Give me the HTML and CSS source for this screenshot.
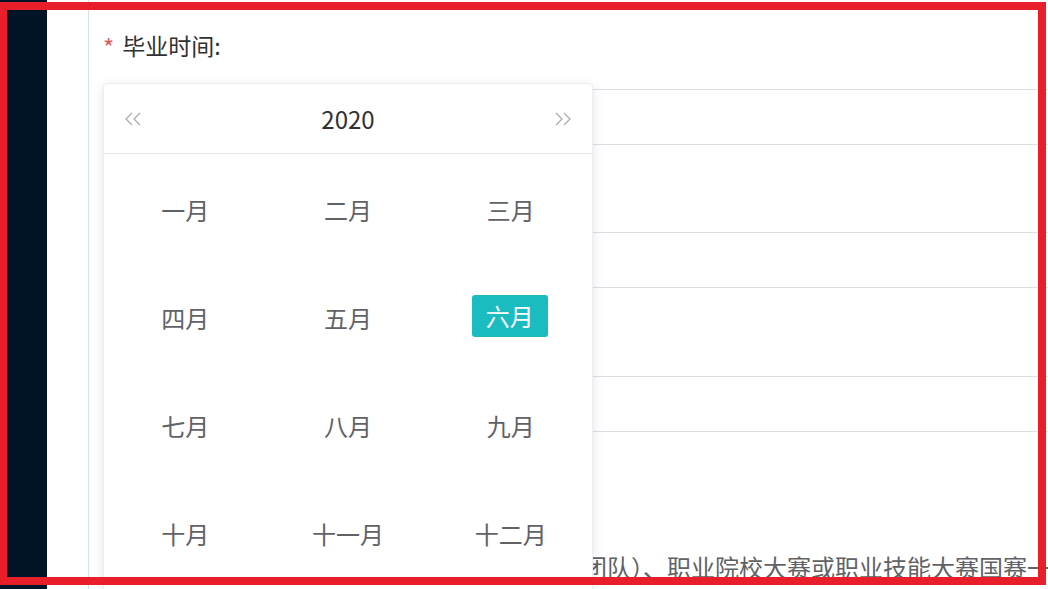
FILE: index.html
```html
<!DOCTYPE html>
<html lang="zh-CN">
<head>
  <meta charset="UTF-8">
  <meta name="viewport" content="width=device-width, initial-scale=1.0">
  <title>毕业时间</title>
  <link rel="stylesheet" href="styles.css">
</head>
<body>
  <div class="layout">
    <aside class="sidebar"></aside>
    <main class="main">
      <div class="content">
        <div class="form-label"><span class="required">*</span>毕业时间:</div>
        <div class="field field-first"></div>
        <div class="field field-gap"></div>
        <div class="field field-gap2"></div>
        <p class="desc">在校期间获得省级以上技能大赛奖项（个人或团队）、职业院校大赛或职业技能大赛国赛一等奖</p>

        <div class="picker">
          <div class="picker-header">
            <button class="arrow" aria-label="上一年">
              <svg width="18" height="14" viewBox="0 0 18 14"><path d="M8 1 L2 7 L8 13 M16 1 L10 7 L16 13" fill="none" stroke="#a8abb2" stroke-width="1.3"/></svg>
            </button>
            <span class="year">2020</span>
            <button class="arrow" aria-label="下一年">
              <svg width="18" height="14" viewBox="0 0 18 14"><path d="M2 1 L8 7 L2 13 M10 1 L16 7 L10 13" fill="none" stroke="#a8abb2" stroke-width="1.3"/></svg>
            </button>
          </div>
          <div class="months">
            <div class="month"><span>一月</span></div>
            <div class="month"><span>二月</span></div>
            <div class="month"><span>三月</span></div>
            <div class="month"><span>四月</span></div>
            <div class="month"><span>五月</span></div>
            <div class="month"><span class="current">六月</span></div>
            <div class="month"><span>七月</span></div>
            <div class="month"><span>八月</span></div>
            <div class="month"><span>九月</span></div>
            <div class="month"><span>十月</span></div>
            <div class="month"><span>十一月</span></div>
            <div class="month"><span>十二月</span></div>
          </div>
        </div>
      </div>
    </main>
  </div>
  <div class="frame"></div>
</body>
</html>
```

FILE: styles.css
```css
body {
  margin: 0;
  height: 589px;
  overflow: hidden;
  background: #fff;
  font-family: "Noto Sans CJK SC", "Noto Sans", sans-serif;
  color: #606266;
}
.layout {
  display: flex;
  height: 589px;
}
.sidebar {
  width: 47px;
  flex-shrink: 0;
  background: #001428;
}
.main {
  flex: 1;
  padding-left: 41px;
  min-width: 0;
}
.content {
  position: relative;
  height: 100%;
  border-left: 1px solid #d3e3ea;
  padding: 30px 0 0 14px;
  box-sizing: border-box;
}
.form-label {
  display: flex;
  align-items: center;
  height: 30px;
  font-size: 23px;
  line-height: 30px;
  color: #303133;
}
.required {
  color: #e0585c;
  font-size: 24px;
  margin-right: 8px;
  margin-top: 4px;
}
.field {
  width: 980px;
  height: 56px;
  box-sizing: border-box;
  border: 1px solid #dcdfe6;
  border-radius: 4px;
}
.field-first { margin-top: 29px; }
.field-gap { margin-top: 87px; }
.field-gap2 { margin-top: 88px; }
.desc {
  margin: 120px 0 0;
  font-size: 24px;
  line-height: 30px;
  white-space: nowrap;
  color: #606266;
}
.picker {
  position: absolute;
  left: 14px;
  top: 83px;
  width: 490px;
  height: 540px;
  background: #fff;
  border: 1px solid #eceef2;
  border-radius: 4px;
  box-shadow: 0 2px 12px rgba(0, 0, 0, 0.1);
  box-sizing: border-box;
}
.picker-header {
  display: flex;
  align-items: center;
  justify-content: space-between;
  height: 70px;
  padding: 0 20px;
  box-sizing: border-box;
  border-bottom: 1px solid #e4e7ed;
}
.arrow {
  border: none;
  background: none;
  padding: 0;
  display: flex;
}
.year {
  font-size: 24px;
  color: #303133;
}
.months {
  display: grid;
  grid-template-columns: repeat(3, 1fr);
  grid-auto-rows: 108px;
  padding-top: 2px;
}
.month {
  display: flex;
  align-items: center;
  justify-content: center;
  font-size: 24px;
}
.month span {
  padding: 0 14px;
  line-height: 42px;
  border-radius: 3px;
}
.month .current {
  background: #1abcc0;
  color: #fff;
  margin-top: -4px;
  margin-left: -2px;
}
.frame {
  position: absolute;
  left: 0;
  top: 2px;
  width: 1046px;
  height: 583px;
  box-sizing: border-box;
  border: 8px solid #e81f2a;
  border-left-width: 7px;
  pointer-events: none;
}
```
